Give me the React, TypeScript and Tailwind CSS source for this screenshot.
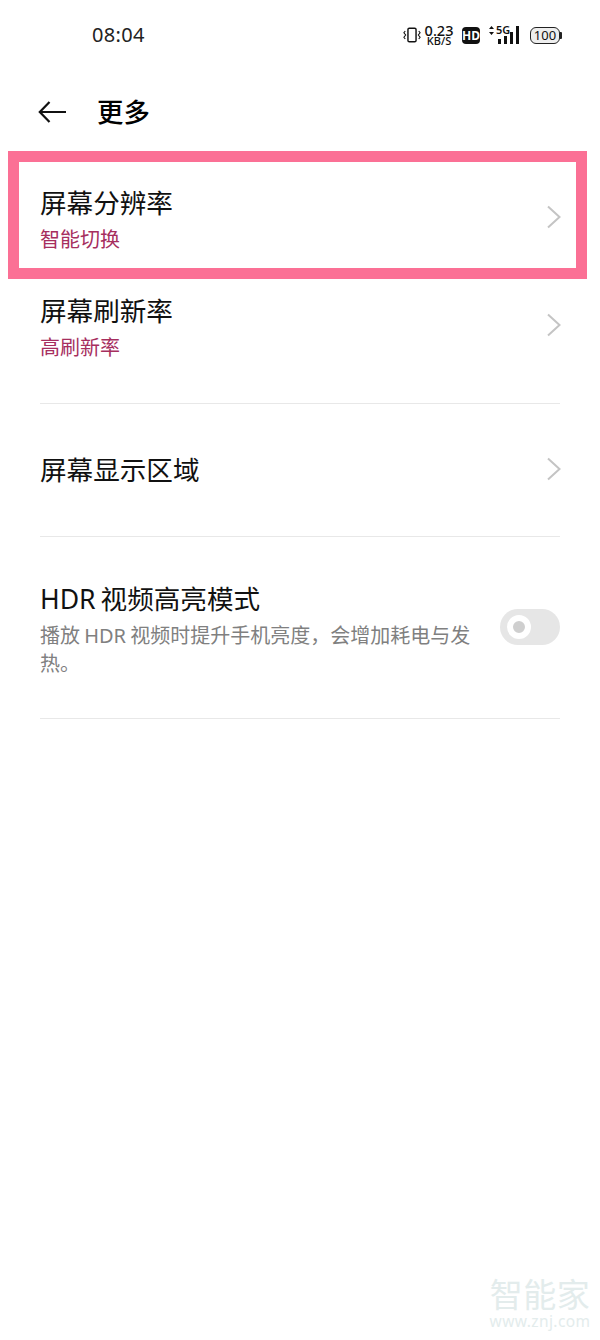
import React from "react";

const font = { fontFamily: '"Noto Sans", "Noto Sans CJK SC", sans-serif' };

function Chevron() {
  return (
    <svg width="14" height="24" viewBox="0 0 14 24" fill="none" className="shrink-0 mb-[10px] -mr-[1px]">
      <path d="M1 1.5 L12.5 12 L1 22.5" stroke="#c4c4c4" strokeWidth="2" />
    </svg>
  );
}

function StatusIcons() {
  return (
    <div className="flex items-center text-[#111]">
      <svg width="18" height="18" viewBox="0 0 20 18" fill="none" stroke="#111" className="mr-[4px]">
        <rect x="5.5" y="1.5" width="9" height="15" rx="1.5" strokeWidth="1.6" />
        <path d="M2.5 4.5 L1 6.5 L3 9 L1 11.5 L2.5 13.5 M17.5 4.5 L19 6.5 L17 9 L19 11.5 L17.5 13.5" strokeWidth="1.2" />
      </svg>
      <div className="flex flex-col items-center w-[28px] font-medium">
        <span className="text-[14.5px] leading-[12px]">0.23</span>
        <span className="text-[11px] leading-[10px]">KB/S</span>
      </div>
      <div className="ml-[9px] w-[18px] h-[17px] rounded-[4px] bg-[#111] text-white text-[12px] leading-[17px] font-bold text-center">HD</div>
      <div className="relative ml-[8px] w-[34px] h-[20px]">
        <svg width="34" height="20" viewBox="0 0 34 20" className="absolute left-0 top-0">
          <path d="M1 4 L3.5 1 L6 4 Z M1 7 L3.5 10 L6 7 Z" fill="#111" />
          <rect x="10" y="14" width="3" height="5" fill="#111" />
          <rect x="16" y="11" width="3" height="8" fill="#111" />
          <rect x="22" y="7" width="3" height="12" fill="#111" />
          <rect x="28" y="1" width="3" height="18" fill="#111" />
        </svg>
        <span className="absolute left-[8px] -top-[1px] text-[11px] leading-[12px] font-semibold">5G</span>
      </div>
      <div className="ml-[8px] flex items-center">
        <div className="w-[30px] h-[17px] rounded-[6px] border-[1.5px] border-[#222] bg-[#eeeeee] text-[13px] leading-[14px] text-center">100</div>
        <div className="w-[2px] h-[7px] bg-[#222] rounded-r-[1px]" />
      </div>
    </div>
  );
}

export default function App() {
  return (
    <div className="relative w-[600px] h-[1340px] bg-white overflow-hidden" style={font}>
      <div className="h-[70px] pl-[92px] pr-[38px] flex items-center justify-between">
        <span className="text-[20px] leading-[28px] text-[#222] tracking-[0.3px]">08:04</span>
        <StatusIcons />
      </div>

      <div className="h-[84px] pl-[38px] flex items-center">
        <svg width="28" height="22" viewBox="0 0 28 22" fill="none" stroke="#111" strokeWidth="2.2">
          <path d="M28 11 H2 M11.5 1 L1.8 11 L11.5 21" />
        </svg>
        <span className="ml-[31px] text-[26.4px] leading-[36px] font-medium text-black">更多</span>
      </div>

      <div className="pl-[40px] pr-[40px]">
        <div className="h-[108px] pt-[31px] flex items-start justify-between">
          <div className="flex items-center justify-between w-full h-[73px]">
            <div>
              <div className="text-[26.6px] leading-[36px] text-[#111]">屏幕分辨率</div>
              <div className="text-[20px] leading-[36px] pt-[1px] text-[#a62e5e]">智能切换</div>
            </div>
            <Chevron />
          </div>
        </div>

        <div className="h-[142px] pt-[31px] border-b border-[#e8e8e8]">
          <div className="flex items-center justify-between h-[73px]">
            <div>
              <div className="text-[26.6px] leading-[36px] text-[#111]">屏幕刷新率</div>
              <div className="text-[20px] leading-[36px] pt-[1px] text-[#a62e5e]">高刷新率</div>
            </div>
            <Chevron />
          </div>
        </div>

        <div className="h-[133px] flex items-center justify-between border-b border-[#e8e8e8]">
          <div className="text-[26.6px] leading-[36px] text-[#111]">屏幕显示区域</div>
          <div className="mt-[8px] flex"><Chevron /></div>
        </div>

        <div className="h-[182px] pt-[44px] flex items-start justify-between border-b border-[#e8e8e8]">
          <div className="w-[440px]">
            <div className="text-[26.6px] leading-[36px] text-[#111] [word-spacing:-2px]">HDR 视频高亮模式</div>
            <div className="text-[20px] leading-[28px] mt-[5px] text-[#808080] [word-spacing:-1px]">播放 HDR 视频时提升手机亮度，会增加耗电与发热。</div>
          </div>
          <div className="mt-[28px] w-[60px] h-[36px] rounded-full bg-[#e6e6e6] pl-[7px] flex items-center">
            <div className="w-[24px] h-[24px] rounded-full border-[6px] border-white bg-[#cfcfcf]" />
          </div>
        </div>
      </div>

      <div className="absolute left-[8px] top-[151px] w-[579px] h-[128px] border-[11px] border-[#fb7095]" />

      <div className="absolute left-[480px] top-[1277px] w-[120px] text-center text-[#e3ecec] whitespace-nowrap">
        <div className="text-[33px] leading-[35px] tracking-[0.5px]">智能家</div>
        <div className="text-[15.5px] leading-[18px] tracking-[0.4px]">www.znj.com</div>
      </div>
    </div>
  );
}
